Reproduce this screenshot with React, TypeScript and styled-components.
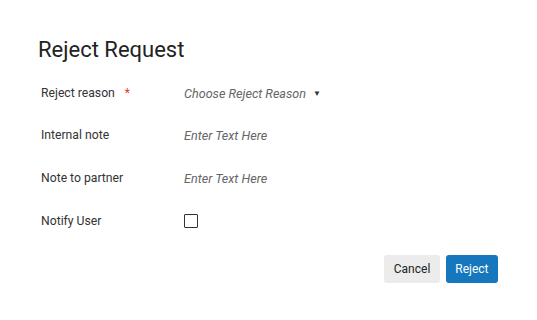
import React from "react";
import styled, { createGlobalStyle } from "styled-components";

const Global = createGlobalStyle`
  html, body { margin: 0; padding: 0; background: #fff; }
  body { font-family: Roboto, "Noto Sans", Arial, sans-serif; color: #333; }
`;

const Dialog = styled.div`
  width: 537px;
  height: 320px;
  box-sizing: border-box;
  padding: 37px 39px 0 38px;
  display: flex;
  flex-direction: column;
`;

const Title = styled.h2`
  margin: 0;
  font-size: 22px;
  line-height: 26px;
  font-weight: 400;
  color: #222;
`;

const Form = styled.div`
  margin-top: 9.5px;
  padding-left: 3px;
  display: grid;
  grid-template-columns: 143px 1fr;
  grid-template-rows: 41px 43px 43px 43px;
  align-items: center;
`;

const Label = styled.div`
  font-size: 12.2px;
  color: #333;
  display: flex;
  align-items: center;
`;

const Required = styled.span`
  color: #e53935;
  margin-left: 10px;
  font-size: 12px;
`;

const Placeholder = styled.span`
  font-size: 12.6px;
  font-style: italic;
  color: #666;
  display: inline-flex;
  align-items: center;
`;

const Caret = styled.span`
  font-style: normal;
  font-size: 8px;
  margin-left: 7px;
  color: #333;
`;

const Checkbox = styled.span`
  display: block;
  width: 12px;
  height: 12px;
  border: 1px solid #333;
  border-radius: 1px;
`;

const Actions = styled.div`
  margin-top: 12.5px;
  display: flex;
  justify-content: flex-end;
  gap: 6px;
`;

const Button = styled.button<{ $primary?: boolean }>`
  height: 28px;
  padding: 0 9.5px;
  border: none;
  border-radius: 3px;
  font-family: Roboto, "Noto Sans", Arial, sans-serif;
  font-size: 12px;
  cursor: pointer;
  background: ${(p) => (p.$primary ? "#1677bd" : "#ececec")};
  color: ${(p) => (p.$primary ? "#fff" : "#222")};
`;

export default function App() {
  return (
    <>
      <Global />
      <Dialog>
        <Title>Reject Request</Title>
        <Form>
          <Label>
            Reject reason<Required>*</Required>
          </Label>
          <Placeholder>
            Choose Reject Reason<Caret>▼</Caret>
          </Placeholder>
          <Label>Internal note</Label>
          <Placeholder>Enter Text Here</Placeholder>
          <Label>Note to partner</Label>
          <Placeholder>Enter Text Here</Placeholder>
          <Label>Notify User</Label>
          <div>
            <Checkbox />
          </div>
        </Form>
        <Actions>
          <Button>Cancel</Button>
          <Button $primary>Reject</Button>
        </Actions>
      </Dialog>
    </>
  );
}
